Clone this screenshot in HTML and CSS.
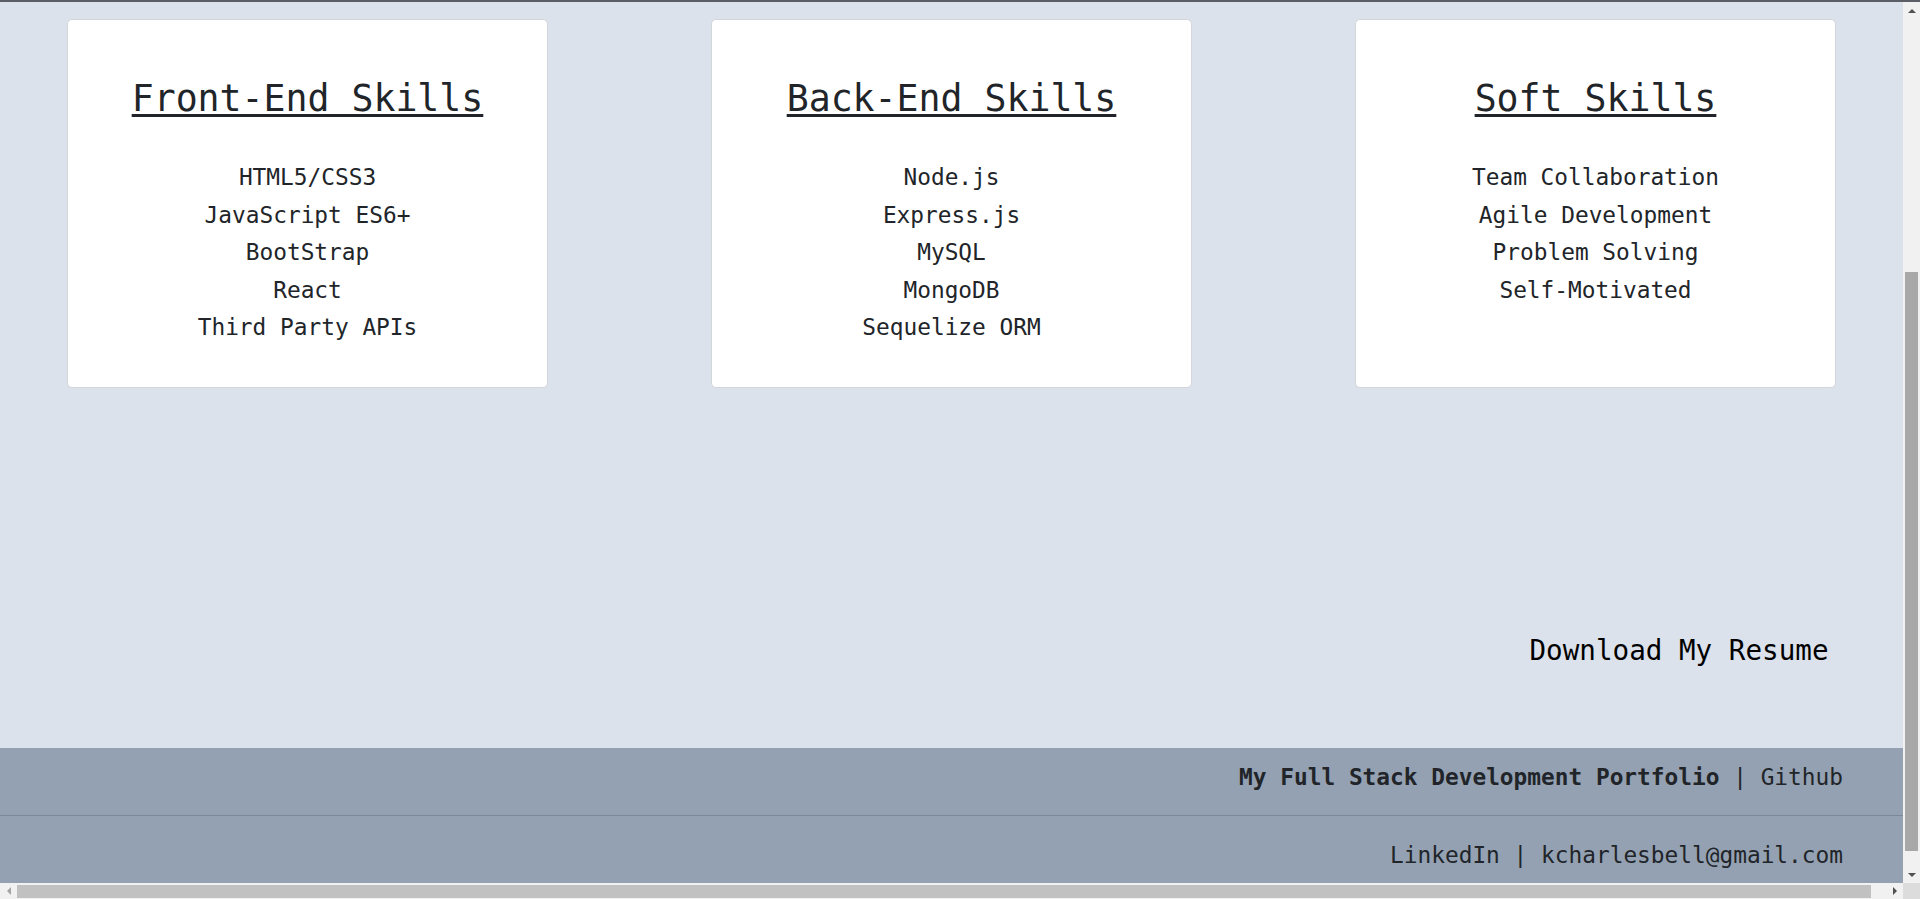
FILE: index.html
```html
<!DOCTYPE html>
<html lang="en">
<head>
<meta charset="utf-8">
<title>Skills</title>
<link rel="stylesheet" href="styles.css">
</head>
<body>
<div class="window">
  <div class="top-edge"></div>
  <div class="frame">
    <div class="viewport">
      <main class="skills">
        <section class="card">
          <h2 class="card-title">Front-End Skills</h2>
          <ul class="skill-list">
            <li>HTML5/CSS3</li>
            <li>JavaScript ES6+</li>
            <li>BootStrap</li>
            <li>React</li>
            <li>Third Party APIs</li>
          </ul>
        </section>
        <section class="card">
          <h2 class="card-title">Back-End Skills</h2>
          <ul class="skill-list">
            <li>Node.js</li>
            <li>Express.js</li>
            <li>MySQL</li>
            <li>MongoDB</li>
            <li>Sequelize ORM</li>
          </ul>
        </section>
        <section class="card">
          <h2 class="card-title">Soft Skills</h2>
          <ul class="skill-list">
            <li>Team Collaboration</li>
            <li>Agile Development</li>
            <li>Problem Solving</li>
            <li>Self-Motivated</li>
          </ul>
        </section>
      </main>
      <div class="resume-row"><a class="resume-link" href="#">Download My Resume</a></div>
      <footer class="footer">
        <div class="footer-row"><strong class="footer-brand">My Full Stack Development Portfolio</strong> | <a class="footer-link" href="#">Github</a></div>
        <hr class="footer-rule">
        <div class="footer-row"><a class="footer-link" href="#">LinkedIn</a> | <a class="footer-link" href="#">kcharlesbell@gmail.com</a></div>
      </footer>
    </div>
    <div class="vscroll" aria-hidden="true">
      <div class="sb-btn"><span class="arrow arrow-up"></span></div>
      <div class="vtrack"><div class="vthumb"></div></div>
      <div class="sb-btn"><span class="arrow arrow-down"></span></div>
    </div>
    <div class="hscroll" aria-hidden="true">
      <div class="sb-btn-h"><span class="arrow arrow-left"></span></div>
      <div class="htrack"><div class="hthumb"></div></div>
      <div class="sb-btn-h"><span class="arrow arrow-right"></span></div>
    </div>
    <div class="corner" aria-hidden="true"></div>
  </div>
</div>
</body>
</html>
```
FILE: styles.css
```css
html, body {
  margin: 0;
  height: 100%;
  overflow: hidden;
}

body {
  font-family: "DejaVu Sans Mono", "Liberation Mono", monospace;
  color: #212529;
  background: #dce2eb;
}

.window {
  height: 100vh;
  display: flex;
  flex-direction: column;
}

.top-edge {
  height: 2px;
  flex: none;
  background: #5b5f65;
}

.frame {
  flex: 1;
  min-height: 0;
  display: grid;
  grid-template-columns: 1fr 17px;
  grid-template-rows: 1fr 16px;
}

.viewport {
  overflow: hidden;
  display: flex;
  flex-direction: column;
  justify-content: flex-end;
  background: #dce2eb;
}

.skills {
  display: flex;
  justify-content: space-between;
  align-items: stretch;
  padding: 0 67px;
  margin-top: 17px;
}

.card {
  box-sizing: border-box;
  width: 481px;
  background: #fff;
  border: 1px solid #d3d6da;
  border-radius: 5px;
  padding: 57.8px 20px 40px;
  text-align: center;
}

.card-title {
  margin: 0 0 38.8px;
  font-size: 36.5px;
  font-weight: 400;
  line-height: 42.5px;
  text-decoration: underline;
  text-decoration-thickness: 3px;
  text-underline-offset: 2.5px;
}

.skill-list {
  list-style: none;
  margin: 0;
  padding: 0;
  font-size: 22.8px;
  line-height: 37.5px;
}

.resume-row {
  display: flex;
  justify-content: flex-end;
  margin-top: 246.8px;
  padding-right: 74.5px;
  font-size: 27.6px;
  line-height: 32px;
}

.resume-link {
  color: #000;
  text-decoration: none;
}

.footer {
  margin-top: 81.5px;
  background: #94a1b2;
  padding: 15.8px 0 14.3px;
}

.footer-row {
  text-align: right;
  padding-right: 60px;
  font-size: 22.8px;
  line-height: 26.5px;
  color: #212529;
}

.footer-brand {
  font-weight: 700;
}

.footer-link {
  color: #212529;
  text-decoration: none;
}

.footer-rule {
  height: 0;
  margin: 24.6px 0 26.1px;
  border: 0;
  border-top: 1px solid #7c8898;
}

/* drawn browser scrollbars */
.vscroll {
  display: flex;
  flex-direction: column;
  background: #f1f1f1;
}

.sb-btn {
  height: 17px;
  flex: none;
  display: flex;
  align-items: center;
  justify-content: center;
}

.vtrack {
  flex: 1;
  display: flex;
  flex-direction: column;
  justify-content: flex-end;
}

.vthumb {
  height: 579px;
  margin: 0 2px 15px;
  background: #a8a8a8;
}

.hscroll {
  display: flex;
  background: #f1f1f1;
}

.sb-btn-h {
  width: 17px;
  flex: none;
  display: flex;
  align-items: center;
  justify-content: center;
}

.htrack {
  flex: 1;
  display: flex;
}

.hthumb {
  flex: 1;
  margin: 2px 15px 1px 0;
  background: #c1c1c1;
}

.corner {
  background: #dcdcdc;
}

.arrow {
  width: 0;
  height: 0;
}

.arrow-up {
  border-left: 4px solid transparent;
  border-right: 4px solid transparent;
  border-bottom: 4px solid #505050;
}

.arrow-down {
  border-left: 4px solid transparent;
  border-right: 4px solid transparent;
  border-top: 4px solid #505050;
}

.arrow-left {
  border-top: 4px solid transparent;
  border-bottom: 4px solid transparent;
  border-right: 4px solid #a3a3a3;
}

.arrow-right {
  border-top: 4px solid transparent;
  border-bottom: 4px solid transparent;
  border-left: 4px solid #505050;
}
```
